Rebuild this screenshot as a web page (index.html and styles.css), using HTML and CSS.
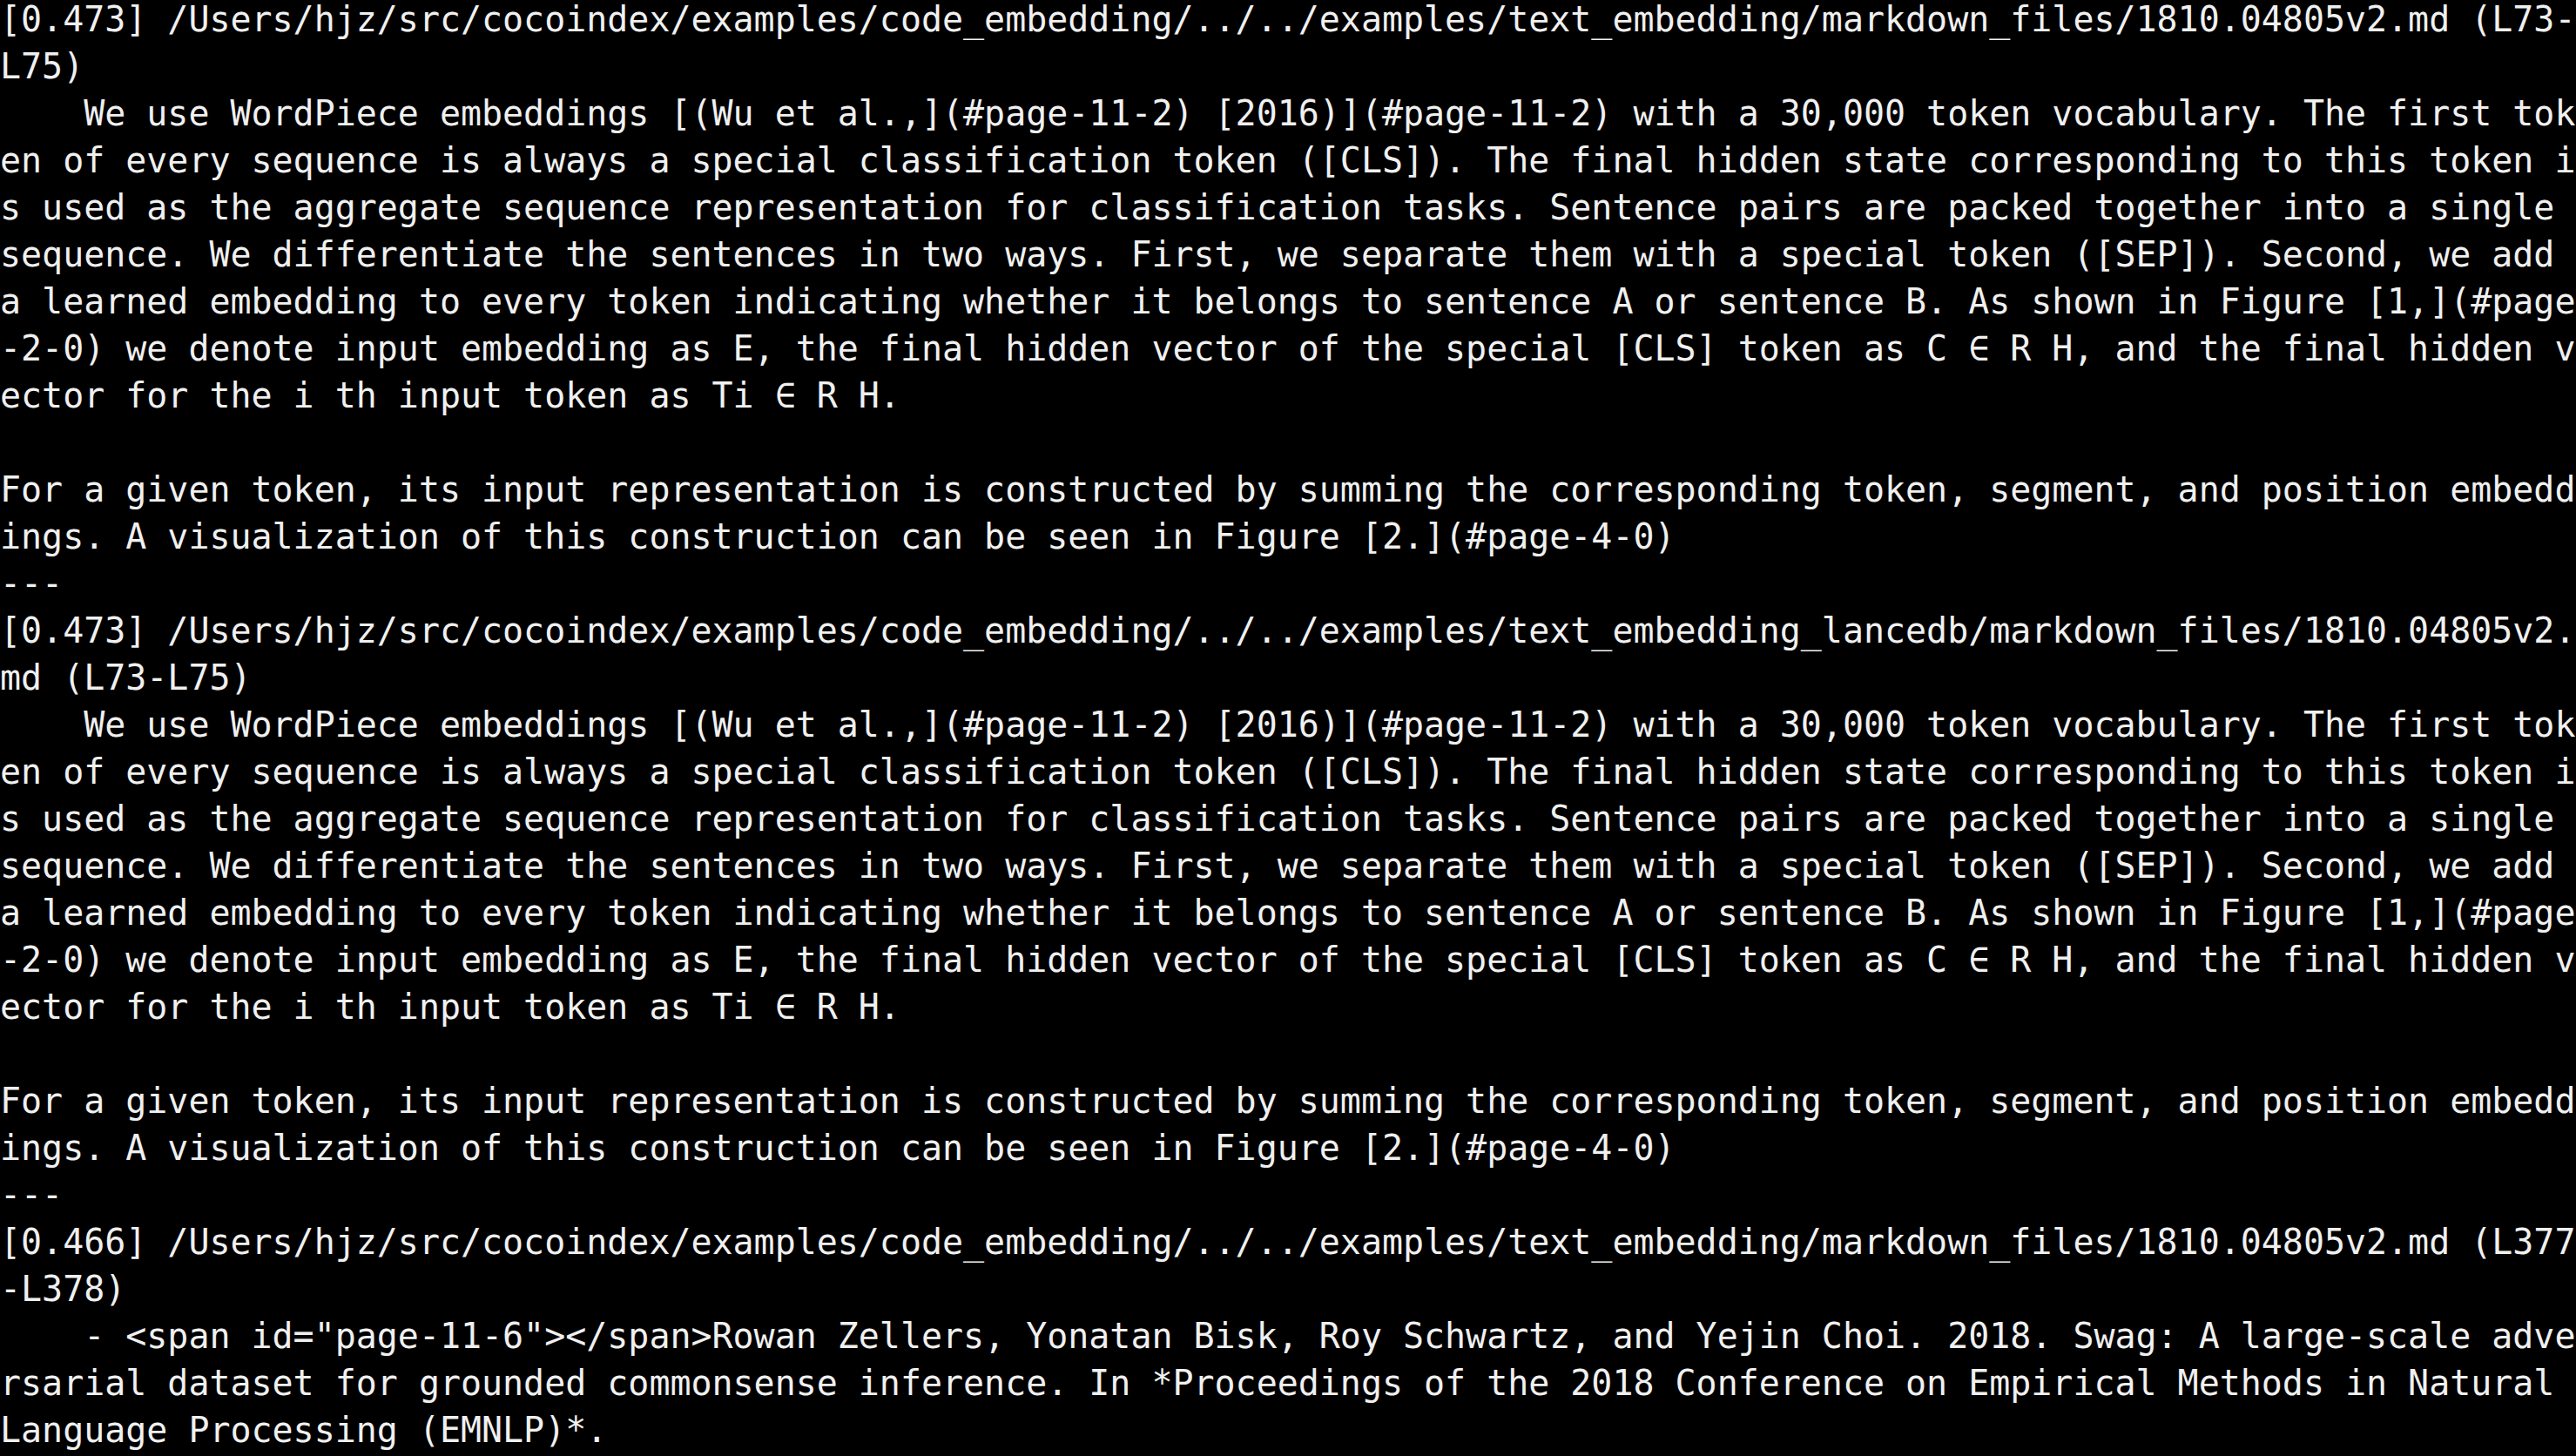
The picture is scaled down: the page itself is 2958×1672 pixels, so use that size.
FILE: index.html
```html
<!DOCTYPE html>
<html lang="en">
<head>
<meta charset="utf-8">
<title>Terminal</title>
<link rel="stylesheet" href="styles.css">
</head>
<body>
<main class="terminal">
<pre class="output">[0.473] /Users/hjz/src/cocoindex/examples/code_embedding/../../examples/text_embedding/markdown_files/1810.04805v2.md (L73-
L75)
    We use WordPiece embeddings [(Wu et al.,](#page-11-2) [2016)](#page-11-2) with a 30,000 token vocabulary. The first tok
en of every sequence is always a special classification token ([CLS]). The final hidden state corresponding to this token i
s used as the aggregate sequence representation for classification tasks. Sentence pairs are packed together into a single 
sequence. We differentiate the sentences in two ways. First, we separate them with a special token ([SEP]). Second, we add 
a learned embedding to every token indicating whether it belongs to sentence A or sentence B. As shown in Figure [1,](#page
-2-0) we denote input embedding as E, the final hidden vector of the special [CLS] token as C ∈ R H, and the final hidden v
ector for the i th input token as Ti ∈ R H.

For a given token, its input representation is constructed by summing the corresponding token, segment, and position embedd
ings. A visualization of this construction can be seen in Figure [2.](#page-4-0)
---
[0.473] /Users/hjz/src/cocoindex/examples/code_embedding/../../examples/text_embedding_lancedb/markdown_files/1810.04805v2.
md (L73-L75)
    We use WordPiece embeddings [(Wu et al.,](#page-11-2) [2016)](#page-11-2) with a 30,000 token vocabulary. The first tok
en of every sequence is always a special classification token ([CLS]). The final hidden state corresponding to this token i
s used as the aggregate sequence representation for classification tasks. Sentence pairs are packed together into a single 
sequence. We differentiate the sentences in two ways. First, we separate them with a special token ([SEP]). Second, we add 
a learned embedding to every token indicating whether it belongs to sentence A or sentence B. As shown in Figure [1,](#page
-2-0) we denote input embedding as E, the final hidden vector of the special [CLS] token as C ∈ R H, and the final hidden v
ector for the i th input token as Ti ∈ R H.

For a given token, its input representation is constructed by summing the corresponding token, segment, and position embedd
ings. A visualization of this construction can be seen in Figure [2.](#page-4-0)
---
[0.466] /Users/hjz/src/cocoindex/examples/code_embedding/../../examples/text_embedding/markdown_files/1810.04805v2.md (L377
-L378)
    - &lt;span id="page-11-6"&gt;&lt;/span&gt;Rowan Zellers, Yonatan Bisk, Roy Schwartz, and Yejin Choi. 2018. Swag: A large-scale adve
rsarial dataset for grounded commonsense inference. In *Proceedings of the 2018 Conference on Empirical Methods in Natural 
Language Processing (EMNLP)*.</pre>
</main>
</body>
</html>
```

FILE: styles.css
```css
html, body {
  margin: 0;
  padding: 0;
  background: #000;
  overflow: hidden;
}

body {
  width: 2958px;
  height: 1672px;
}

.terminal {
  background: #000;
  color: #f0f0f0;
  height: 100%;
}

.output {
  margin: -5px 0 0 0;
  padding: 0;
  font-family: "DejaVu Sans Mono", "Liberation Mono", monospace;
  font-size: 39.95px;
  line-height: 54px;
  white-space: pre;
  color: #f0f0f0;
}
```
